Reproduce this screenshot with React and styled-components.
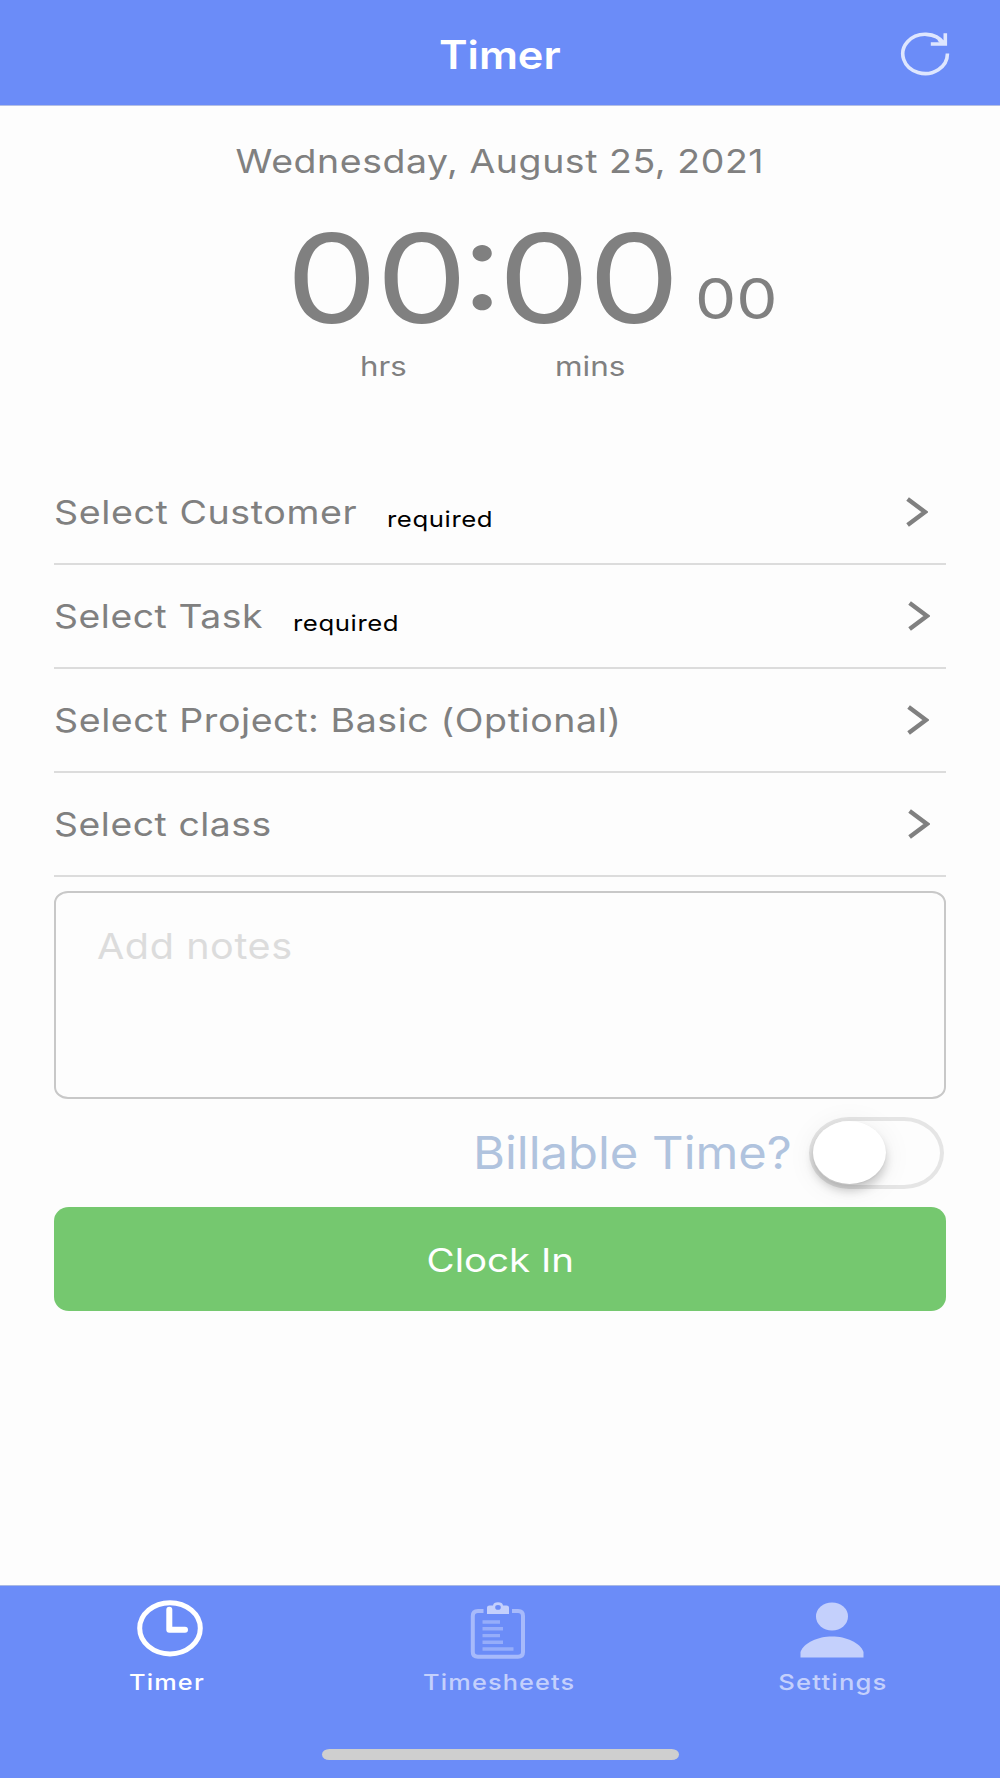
import React, { useState } from "react";
import styled, { createGlobalStyle } from "styled-components";

const GlobalStyle = createGlobalStyle`
  * { box-sizing: border-box; }
  body { margin: 0; background: #fdfdfd; }
`;

const Screen = styled.div`
  display: flex;
  flex-direction: column;
  width: 1000px;
  height: 1778px;
  background: #fdfdfd;
  color: #808080;
  font-family: Inter, "Liberation Sans", sans-serif;
  overflow: hidden;
`;

const Label = styled.span`
  display: block;
  white-space: nowrap;
  font-size: ${(p) => p.$size}px;
  font-weight: ${(p) => p.$weight || 400};
  line-height: ${(p) => p.$line || 40}px;
  letter-spacing: ${(p) => p.$spacing || 0}px;
  color: ${(p) => p.$color || "inherit"};
  transform: scaleX(${(p) => p.$stretch || 1});
  transform-origin: ${(p) => p.$origin || "left"} center;
`;

const Header = styled.header`
  display: grid;
  grid-template-columns: 1fr auto 1fr;
  align-items: center;
  height: 106px;
  padding: 4px 50px 0 50px;
  background: #6b8cf8;
  border-bottom: 1px solid #b4bfe4;
`;

const Title = styled.h1`
  grid-column: 2;
  margin: 0;
`;

const RefreshButton = styled.button`
  justify-self: end;
  display: flex;
  padding: 0;
  border: 0;
  background: none;
`;

const Main = styled.main`
  flex: 1;
  display: flex;
  flex-direction: column;
  padding: 0 54px;
`;

const DateLine = styled.div`
  display: flex;
  justify-content: center;
  margin-top: 35px;
`;

const Clock = styled.div`
  display: flex;
  height: 124px;
  margin-top: 35px;
  padding-left: 232px;
`;

const ClockMain = styled.div`
  width: 409px;
`;

const HourUnits = styled.span`
  letter-spacing: -5.5px;
`;

const Colon = styled.span`
  letter-spacing: -4px;
  font-feature-settings: "case" 1;
`;

const Seconds = styled.div`
  padding-top: 63px;
`;

const Units = styled.div`
  display: flex;
  height: 30px;
  margin-top: 12px;
  padding-left: 306px;
`;

const Unit = styled.div`
  width: 195px;
`;

const List = styled.div`
  display: flex;
  flex-direction: column;
  margin-top: 79px;
`;

const Row = styled.div`
  display: flex;
  align-items: center;
  height: 104px;
  border-bottom: 2px solid #dcdcdc;
`;

const RowName = styled.div`
  width: ${(p) => p.$width}px;
`;

const Required = styled.div`
  padding-top: 13px;
`;

const Chevron = styled.svg`
  margin-left: auto;
  margin-right: ${(p) => p.$gap}px;
`;

const Notes = styled.div`
  height: 208px;
  margin-top: 14px;
  padding: 33px 41px;
  border: 2px solid #c8c8c8;
  border-radius: 14px / 12px;
`;

const BillableRow = styled.div`
  display: flex;
  align-items: center;
  height: 72px;
  margin-top: 18px;
  padding-left: 419px;
`;

const BillableText = styled.div`
  width: 336px;
`;

const Switch = styled.button`
  display: flex;
  width: 135px;
  height: 72px;
  padding: 0;
  border: 4px solid #e5e5e5;
  border-radius: 40px / 36px;
  background: #fdfdfd;
  justify-content: ${(p) => (p.$on ? "flex-end" : "flex-start")};
`;

const Knob = styled.span`
  width: 73px;
  height: 63px;
  border-radius: 50%;
  background: #fff;
  box-shadow: 0 7px 10px rgba(0, 0, 0, 0.18), 0 4px 30px rgba(0, 0, 0, 0.07), 0 1px 2px rgba(0, 0, 0, 0.06);
`;

const ClockIn = styled.button`
  display: flex;
  align-items: center;
  justify-content: center;
  height: 104px;
  margin-top: 18px;
  padding: 2px 0 0;
  border: 0;
  border-radius: 15px / 14px;
  background: #75c86f;
  color: #fff;
  font-family: inherit;
`;

const TabBar = styled.nav`
  display: flex;
  flex-direction: column;
  align-items: center;
  height: 193px;
  background: #6b8cf8;
  border-top: 1px solid #a9b9e4;
`;

const Tabs = styled.div`
  display: grid;
  grid-template-columns: 334px 331px 335px;
  height: 163px;
  width: 1000px;
`;

const Tab = styled.div`
  display: flex;
  flex-direction: column;
  align-items: center;
  padding-top: 12px;
  color: ${(p) => (p.$active ? "#fff" : "#c4d0fc")};
`;

const TabIcon = styled.svg`
  display: block;
  margin-left: ${(p) => p.$shift || 0}px;
  margin-bottom: 8px;
`;

const HomeIndicator = styled.div`
  width: 357px;
  height: 11px;
  border-radius: 8px / 6px;
  background: #cfcfcf;
`;

const rows = [
  { name: "Select Customer", width: 333, required: true, gap: 18, stretch: 1.14 },
  { name: "Select Task", width: 239, required: true, gap: 16, stretch: 1.13 },
  { name: "Select Project: Basic (Optional)", width: 600, gap: 17, stretch: 1.138 },
  { name: "Select class", width: 300, gap: 16, stretch: 1.13 },
];

function RefreshIcon() {
  return (
    <svg width="50" height="46" viewBox="0 0 50 46" fill="none" stroke="#fff" strokeOpacity="0.78" strokeWidth="3.6">
      <path d="M47.4 21.5 A22.3 19.6 0 1 1 44 11.5 M45.3 1.2 V12 H30.8 M38.5 7.5 L45 11.5" />
    </svg>
  );
}

function TimerIcon() {
  return (
    <TabIcon $shift={5} width="70" height="62" viewBox="0 0 70 62" fill="none" stroke="currentColor">
      <ellipse cx="35" cy="30.3" rx="30.3" ry="25.6" strokeWidth="5" />
      <path d="M34.3 11.8 V31.7 H50" strokeWidth="6" strokeLinecap="round" strokeLinejoin="round" />
    </TabIcon>
  );
}

function TimesheetsIcon() {
  return (
    <TabIcon $shift={-5} width="70" height="62" viewBox="0 0 70 62" fill="none" stroke="currentColor">
      <path
        d="M21.5 13 H16 Q10.8 13 10.8 18 V54 Q10.8 58.8 16 58.8 H56 Q61 58.8 61 54 V18 Q61 13 56 13 H50"
        strokeWidth="4"
        opacity="0.68"
      />
      <path
        fill="currentColor"
        stroke="none"
        fillRule="evenodd"
        d="M25 16 V9.5 Q25 7.5 27.5 7.5 H31 Q31.5 4.3 36 4.3 Q40.5 4.3 41 7.5 H44.5 Q47 7.5 47 9.5 V16 Z M36 7 A2.8 2.4 0 1 0 36 11.8 A2.8 2.4 0 1 0 36 7 Z"
      />
      <path d="M20.5 24 H38 M20.5 30.8 H41 M20.5 37.6 H38 M20.5 44.2 H41 M20.5 51 H51.5" strokeWidth="3.4" opacity="0.48" />
    </TabIcon>
  );
}

function SettingsIcon() {
  return (
    <TabIcon $shift={-1} width="70" height="62" viewBox="0 0 70 62" fill="currentColor">
      <ellipse cx="35" cy="18.5" rx="16" ry="14" />
      <path d="M3.5 59.5 V54 C7 44.5 21 38.5 35 38.5 C49 38.5 63 44.5 66.5 54 V59.5 Z" />
    </TabIcon>
  );
}

export default function App() {
  const [billable, setBillable] = useState(false);
  return (
    <>
      <GlobalStyle />
      <Screen>
        <Header>
          <Title>
            <Label $size={39} $weight={600} $color="#fff" $stretch={1.11} $origin="center">Timer</Label>
          </Title>
          <RefreshButton aria-label="Refresh"><RefreshIcon /></RefreshButton>
        </Header>
        <Main>
          <DateLine>
            <Label $size={33} $stretch={1.135} $origin="center" $spacing={0.5}>Wednesday, August 25, 2021</Label>
          </DateLine>
          <Clock>
            <ClockMain>
              <Label $size={124} $line={124} $stretch={1.172} $spacing={-1.5}>
                0<HourUnits>0</HourUnits><Colon>:</Colon>00
              </Label>
            </ClockMain>
            <Seconds>
              <Label $size={56} $stretch={1.168}>00</Label>
            </Seconds>
          </Clock>
          <Units>
            <Unit><Label $size={27} $line={30} $stretch={1.155}>hrs</Label></Unit>
            <Unit><Label $size={27} $line={30} $stretch={1.165}>mins</Label></Unit>
          </Units>
          <List>
            {rows.map((r) => (
              <Row key={r.name}>
                <RowName $width={r.width}>
                  <Label $size={33} $stretch={r.stretch} $spacing={0.5}>{r.name}</Label>
                </RowName>
                {r.required && (
                  <Required>
                    <Label $size={22} $color="#000" $stretch={1.17} $spacing={0.5}>required</Label>
                  </Required>
                )}
                <Chevron $gap={r.gap} width="22" height="30" viewBox="0 0 22 30" fill="none" stroke="#808080" strokeWidth="4.4">
                  <path d="M1.6 2 L19 15 L1.6 28" />
                </Chevron>
              </Row>
            ))}
          </List>
          <Notes>
            <Label $size={36} $color="#dcdcdc" $stretch={1.1} $spacing={0.5}>Add notes</Label>
          </Notes>
          <BillableRow>
            <BillableText>
              <Label $size={45} $color="#b0c3de" $stretch={1.087} $line={50}>Billable Time?</Label>
            </BillableText>
            <Switch $on={billable} onClick={() => setBillable(!billable)} aria-label="Billable Time">
              <Knob />
            </Switch>
          </BillableRow>
          <ClockIn>
            <Label $size={33} $stretch={1.165} $origin="center">Clock In</Label>
          </ClockIn>
        </Main>
        <TabBar>
          <Tabs>
            <Tab $active>
              <TimerIcon />
              <Label $size={22} $line={28} $weight={500} $stretch={1.15} $spacing={1} $origin="center">Timer</Label>
            </Tab>
            <Tab>
              <TimesheetsIcon />
              <Label $size={22} $line={28} $weight={500} $stretch={1.15} $spacing={1} $origin="center">Timesheets</Label>
            </Tab>
            <Tab>
              <SettingsIcon />
              <Label $size={22} $line={28} $weight={500} $stretch={1.165} $spacing={1} $origin="center">Settings</Label>
            </Tab>
          </Tabs>
          <HomeIndicator />
        </TabBar>
      </Screen>
    </>
  );
}
